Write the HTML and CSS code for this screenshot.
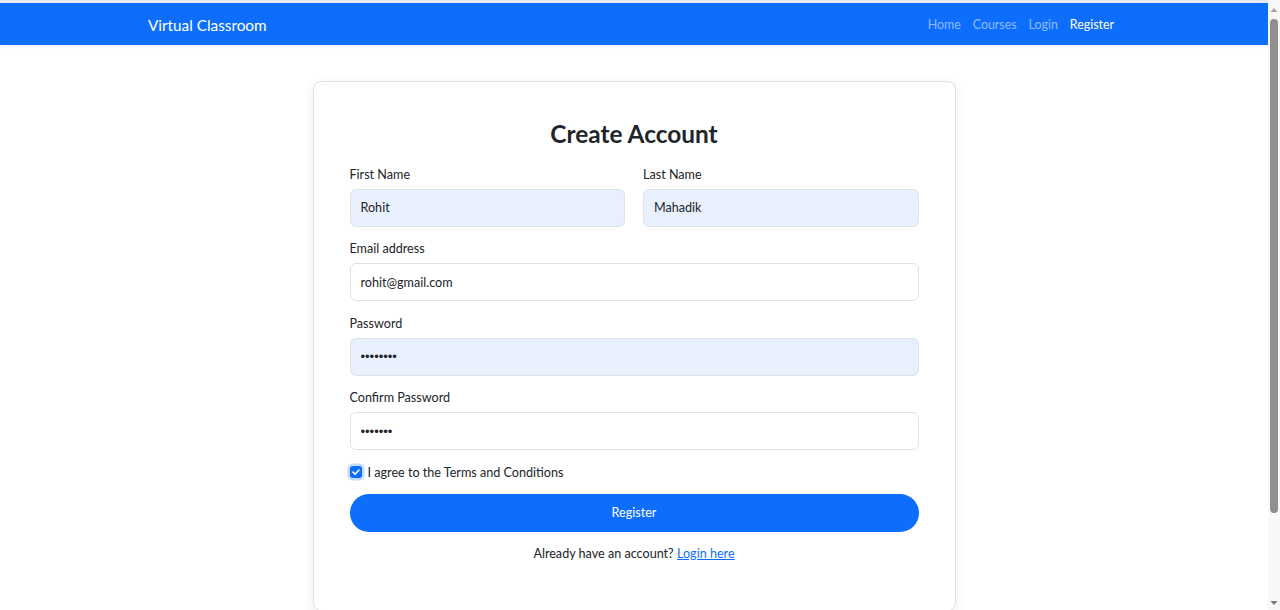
FILE: index.html
```html
<!DOCTYPE html>
<html lang="en">

<head>
    <meta charset="UTF-8">
    <meta name="viewport" content="width=device-width, initial-scale=1.0">
    <title>Register - Virtual Classroom</title>
    <link rel="stylesheet" href="styles.css">
</head>

<body>
    <div class="viewport">
        <nav class="navbar">
            <div class="nav-inner">
                <a class="brand" href="#">Virtual Classroom</a>
                <div class="nav-links">
                    <a class="nav-link" href="#">Home</a>
                    <a class="nav-link" href="#">Courses</a>
                    <a class="nav-link" href="#">Login</a>
                    <a class="nav-link active" href="#">Register</a>
                </div>
            </div>
        </nav>

        <main class="page">
            <div class="card">
                <h2 class="card-title">Create Account</h2>
                <form class="register-form">
                    <div class="row">
                        <div class="field">
                            <label for="first-name">First Name</label>
                            <input class="input autofilled" id="first-name" type="text" value="Rohit">
                        </div>
                        <div class="field">
                            <label for="last-name">Last Name</label>
                            <input class="input autofilled" id="last-name" type="text" value="Mahadik">
                        </div>
                    </div>
                    <div class="field">
                        <label for="email">Email address</label>
                        <input class="input" id="email" type="email" value="rohit@gmail.com">
                    </div>
                    <div class="field">
                        <label for="password">Password</label>
                        <input class="input autofilled" id="password" type="password" value="12345678">
                    </div>
                    <div class="field">
                        <label for="confirm">Confirm Password</label>
                        <input class="input" id="confirm" type="password" value="1234567">
                    </div>
                    <div class="check-row">
                        <span class="checkbox">
                            <svg viewBox="0 0 12 12" width="12" height="12">
                                <path d="M3 6.2 L5.1 8.2 L9 4" fill="none" stroke="#fff" stroke-width="1.6"
                                    stroke-linecap="round" stroke-linejoin="round" />
                            </svg>
                        </span>
                        <span>I agree to the Terms and Conditions</span>
                    </div>
                    <button class="btn-register" type="button">Register</button>
                    <p class="login-text">Already have an account? <a href="#">Login here</a></p>
                </form>
            </div>
        </main>
    </div>

    <!-- window scrollbar -->
    <div class="scrollbar">
        <svg class="scroll-arrow" viewBox="0 0 12 12" width="12" height="12">
            <path d="M2.5 8 L6 4 L9.5 8 Z" fill="#a3a3a3" />
        </svg>
        <div class="scroll-track">
            <div class="scroll-thumb"></div>
        </div>
        <svg class="scroll-arrow" viewBox="0 0 12 12" width="12" height="12">
            <path d="M2.5 4 L6 8 L9.5 4 Z" fill="#7a7a7a" />
        </svg>
    </div>
</body>

</html>
```

FILE: styles.css
```css
body {
    margin: 0;
    height: 610px;
    overflow: hidden;
    display: grid;
    grid-template-columns: 1fr 12px;
    font-family: Lato, "Noto Sans", sans-serif;
    font-size: 12.6px;
    color: #212529;
    background-color: #fff;
}

.viewport {
    overflow: hidden;
}

.navbar {
    background-color: #0d6efd;
    border-top: 3px solid #e4e9ef;
    height: 42px;
    box-shadow: 0 1px 3px rgba(0, 0, 0, 0.08);
}

.nav-inner {
    width: 972px;
    height: 100%;
    margin: 0 auto;
    display: flex;
    justify-content: space-between;
    align-items: center;
}

.brand {
    color: #fff;
    text-decoration: none;
    font-size: 15.3px;
    padding-top: 1px;
}

.nav-links {
    display: flex;
    padding-top: 1px;
}

.nav-link {
    color: rgba(255, 255, 255, 0.55);
    text-decoration: none;
    padding: 6px;
    font-size: 12.4px;
}

.nav-link.active {
    color: #fff;
}

.page {
    display: flex;
    justify-content: center;
    padding: 36px 0 100px;
}

.card {
    width: 569px;
    padding: 36px 36px 36px;
    border: 1px solid #dee2e6;
    border-radius: 8px;
    box-shadow: 0 4px 12px rgba(0, 0, 0, 0.08);
    background-color: #fff;
}

.card-title {
    margin: 1px 0 15px;
    text-align: center;
    font-size: 24.4px;
    font-weight: 700;
    line-height: 1.25;
}

.row {
    display: flex;
    gap: 18px;
}

.row .field {
    flex: 1;
}

.field {
    display: flex;
    flex-direction: column;
    margin-bottom: 12.6px;
}

.field label {
    line-height: 19px;
    margin-bottom: 5px;
}

.input {
    box-sizing: border-box;
    height: 38px;
    padding: 0 10px;
    font-family: inherit;
    font-size: 12.6px;
    color: #212529;
    background-color: #fff;
    border: 1px solid #dee2e6;
    border-radius: 6px;
    outline: none;
}

.input[type="password"] {
    font-family: "Liberation Sans", sans-serif;
    font-size: 13px;
}

.input.autofilled {
    background-color: #e8f0fe;
}

.check-row {
    display: flex;
    align-items: center;
    gap: 6px;
    line-height: 19px;
    margin: 10px 0 12px;
}

.checkbox {
    display: flex;
    width: 12px;
    height: 12px;
    background-color: #0d6efd;
    border-radius: 3px;
    box-shadow: 0 0 0 2.5px rgba(13, 110, 253, 0.25);
}

.btn-register {
    display: block;
    width: 100%;
    height: 38px;
    font-family: inherit;
    font-size: 12.6px;
    color: #fff;
    background-color: #0d6efd;
    border: none;
    border-radius: 19px;
    cursor: pointer;
}

.login-text {
    margin: 12px 0 11px;
    text-align: center;
    line-height: 19px;
}

.login-text a {
    color: #0d6efd;
}

.scrollbar {
    display: flex;
    flex-direction: column;
    background-color: #f8f8f8;
}

.scroll-arrow {
    flex: none;
    margin: 4px 0 0;
}

.scroll-arrow:last-child {
    margin: 0 0 1px;
}

.scroll-track {
    flex: 1;
    padding: 3px 2px 0;
}

.scroll-thumb {
    height: 494px;
    background-color: #8f8f8f;
    border-radius: 4px;
}
```
